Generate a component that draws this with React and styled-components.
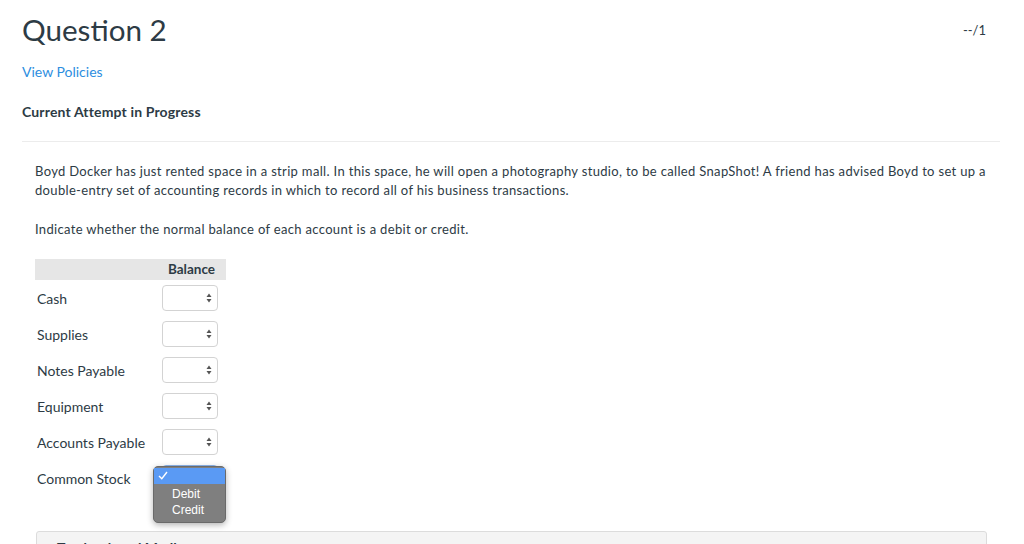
import React from 'react';
import styled, { createGlobalStyle } from 'styled-components';

const GlobalStyle = createGlobalStyle`
  html, body {
    margin: 0;
    padding: 0;
    background: #fff;
  }
  body {
    font-family: Lato, "Open Sans", sans-serif;
    color: #2d3b45;
    overflow: hidden;
  }
`;

const Page = styled.div`
  width: 978px;
  padding: 12px 0 0 22px;
`;

const HeaderRow = styled.div`
  display: flex;
  justify-content: space-between;
  align-items: center;
`;

const Title = styled.h1`
  margin: 0;
  font-size: 29.6px;
  font-weight: 400;
  line-height: 36px;
`;

const Points = styled.span`
  font-size: 13px;
  padding-right: 14px;
`;

const PolicyLink = styled.a`
  display: block;
  margin-top: 14px;
  font-size: 14px;
  line-height: 20px;
  color: #2d8ee0;
  text-decoration: none;
`;

const Attempt = styled.div`
  margin-top: 20px;
  font-size: 14px;
  font-weight: 700;
  letter-spacing: 0.15px;
  line-height: 20px;
  padding-bottom: 19px;
  border-bottom: 1px solid #ececec;
`;

const Body = styled.div`
  padding: 20px 13px 0 13px;
`;

const Text = styled.p`
  margin: 0 0 20px;
  font-size: 13px;
  letter-spacing: 0.33px;
  line-height: 19px;
`;

const Table = styled.div`
  display: grid;
  grid-template-columns: 127px 64px;
  width: 191px;
  margin-top: 20px;
`;

const HeadCell = styled.div`
  background: #e6e6e6;
  height: 21px;
  font-size: 13.5px;
  font-weight: 700;
  line-height: 21px;
  text-align: right;
  padding-right: ${(p) => (p.$pad ? '11px' : '0')};
`;

const Label = styled.div`
  height: 36px;
  display: flex;
  align-items: center;
  padding-left: 2px;
  font-size: 14px;
`;

const Cell = styled.div`
  position: relative;
  height: 36px;
  display: flex;
  align-items: center;
`;

const Select = styled.div`
  width: 56px;
  height: 26px;
  box-sizing: border-box;
  border: 1px solid ${(p) => (p.$focus ? '#8fb8ee' : '#d3d3d3')};
  border-radius: 4px;
  background: #fff;
  display: flex;
  align-items: center;
  justify-content: flex-end;
  padding-right: 5px;
`;

const Menu = styled.div`
  position: absolute;
  left: -9px;
  top: 6px;
  width: 71px;
  padding: 1px 0 4px;
  background: #7f7f7f;
  border: 1px solid #6a6a6a;
  border-radius: 5px;
  box-shadow: 0 2px 6px rgba(0, 0, 0, 0.3);
  font-family: "Liberation Sans", Arial, sans-serif;
  font-size: 12px;
  color: #fff;
  z-index: 2;
`;

const Option = styled.div`
  height: 16px;
  line-height: 16px;
  padding-left: ${(p) => (p.$check ? '4px' : '18px')};
  background: ${(p) => (p.$active ? '#5a9af4' : 'transparent')};
  margin-bottom: ${(p) => (p.$active ? '2px' : '0')};
`;

const ResourceBox = styled.div`
  margin-top: 35px;
  margin-left: 1px;
  height: 40px;
  background: #f4f4f4;
  border: 1px solid #dcdcdc;
  border-radius: 3px;
  padding: 7px 20px;
  box-sizing: border-box;
  font-size: 14px;
  font-weight: 700;
`;

const Arrows = () => (
  <svg width="6" height="10" viewBox="0 0 6 10">
    <path d="M3 0.5 L5.5 4 L0.5 4 Z" fill="#555" />
    <path d="M3 9.5 L5.5 6 L0.5 6 Z" fill="#555" />
  </svg>
);

const Check = () => (
  <svg width="10" height="9" viewBox="0 0 10 9">
    <path d="M1 5 L3.8 7.8 L9 1" stroke="#fff" strokeWidth="1.4" fill="none" />
  </svg>
);

const accounts = ['Cash', 'Supplies', 'Notes Payable', 'Equipment', 'Accounts Payable', 'Common Stock'];

export default function App() {
  return (
    <Page>
      <GlobalStyle />
      <HeaderRow>
        <Title>Question 2</Title>
        <Points>--/1</Points>
      </HeaderRow>
      <PolicyLink href="#">View Policies</PolicyLink>
      <Attempt>Current Attempt in Progress</Attempt>
      <Body>
        <Text>
          Boyd Docker has just rented space in a strip mall. In this space, he will open a photography studio, to be
          called SnapShot! A friend has advised Boyd to set up a double-entry set of accounting records in which to
          record all of his business transactions.
        </Text>
        <Text>Indicate whether the normal balance of each account is a debit or credit.</Text>
        <Table>
          <HeadCell />
          <HeadCell $pad>Balance</HeadCell>
          {accounts.map((name, i) => {
            const open = i === accounts.length - 1;
            return (
              <React.Fragment key={name}>
                <Label>{name}</Label>
                <Cell>
                  <Select $focus={open}>
                    <Arrows />
                  </Select>
                  {open && (
                    <Menu>
                      <Option $active $check>
                        <Check />
                      </Option>
                      <Option>Debit</Option>
                      <Option>Credit</Option>
                    </Menu>
                  )}
                </Cell>
              </React.Fragment>
            );
          })}
        </Table>
        <ResourceBox>Textbook and Media</ResourceBox>
      </Body>
    </Page>
  );
}
